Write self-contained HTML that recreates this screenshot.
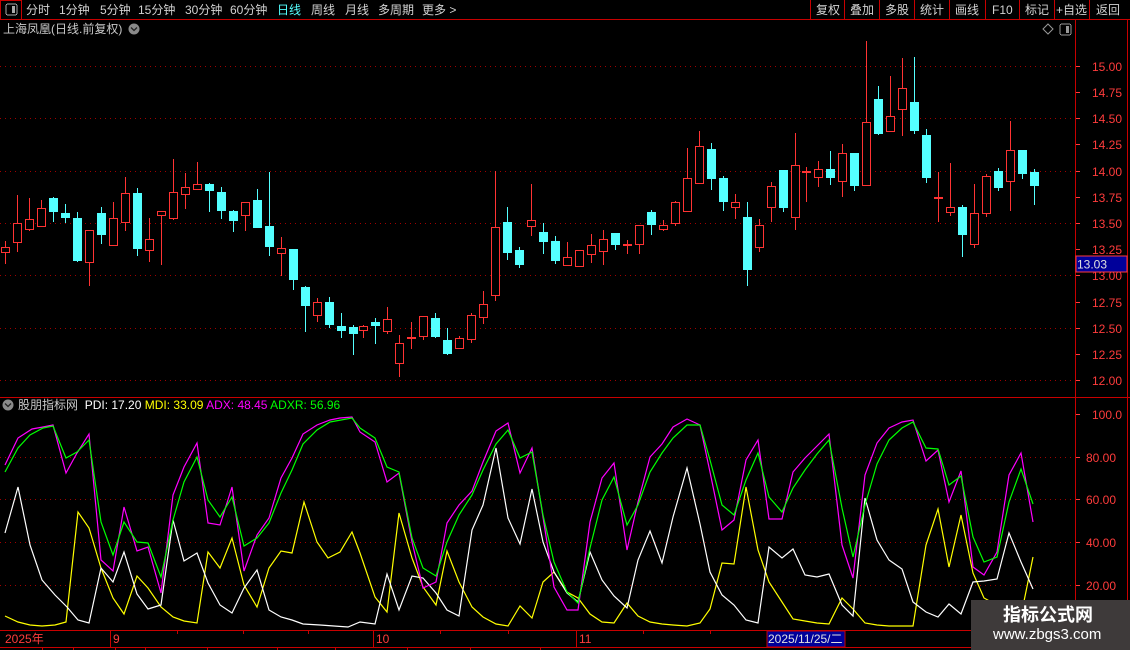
<!DOCTYPE html>
<html><head><meta charset="utf-8"><style>
html,body{margin:0;padding:0;background:#000;width:1130px;height:650px;overflow:hidden}
body{font-family:"Liberation Sans","Noto Sans CJK SC",sans-serif;position:relative}
.t{position:absolute;font-size:12px;color:#d2d2d2;white-space:nowrap;line-height:14px}
svg{position:absolute;left:0;top:0}
.r{fill:#000;stroke:#ff3333;stroke-width:1}
.rf{fill:#ff3333}
.c{fill:#54ffff}
.wr{stroke:#ff3333;stroke-width:1}
.wc{stroke:#54ffff;stroke-width:1}
.ax{font-size:12px;fill:#ff3c3c;font-family:"Liberation Sans",sans-serif}
</style></head><body>
<svg width="1130" height="650" shape-rendering="crispEdges">
<!-- frame lines -->
<line x1="0" y1="19.5" x2="1130" y2="19.5" stroke="#c80000"/>
<rect x="0.5" y="0.5" width="21" height="19" fill="none" stroke="#c80000"/>
<rect x="6" y="4" width="11" height="11" rx="2" fill="none" stroke="#aaa"/>
<rect x="12" y="6" width="3" height="7" fill="#aaa"/>
<g stroke="#c80000"><line x1="810.5" y1="0" x2="810.5" y2="19"/><line x1="844.5" y1="0" x2="844.5" y2="19"/><line x1="879.5" y1="0" x2="879.5" y2="19"/><line x1="914.5" y1="0" x2="914.5" y2="19"/><line x1="949.5" y1="0" x2="949.5" y2="19"/><line x1="985.5" y1="0" x2="985.5" y2="19"/><line x1="1019.5" y1="0" x2="1019.5" y2="19"/><line x1="1054.5" y1="0" x2="1054.5" y2="19"/><line x1="1089.5" y1="0" x2="1089.5" y2="19"/></g>
<line x1="1075.5" y1="19" x2="1075.5" y2="630" stroke="#c80000"/>
<line x1="1127.5" y1="19" x2="1127.5" y2="650" stroke="#c80000"/>
<line x1="0" y1="397.5" x2="1130" y2="397.5" stroke="#c80000"/>
<line x1="0" y1="630.5" x2="1130" y2="630.5" stroke="#c80000"/>
<line x1="0" y1="647.5" x2="1130" y2="647.5" stroke="#c80000"/>
<g stroke="#c80000"><line x1="110.5" y1="630" x2="110.5" y2="647"/><line x1="373.5" y1="630" x2="373.5" y2="647"/><line x1="576.5" y1="630" x2="576.5" y2="647"/><line x1="177.5" y1="630" x2="177.5" y2="634"/><line x1="243.5" y1="630" x2="243.5" y2="634"/><line x1="308.5" y1="630" x2="308.5" y2="634"/><line x1="440.5" y1="630" x2="440.5" y2="634"/><line x1="508.5" y1="630" x2="508.5" y2="634"/><line x1="643.5" y1="630" x2="643.5" y2="634"/><line x1="710.5" y1="630" x2="710.5" y2="634"/><line x1="842.5" y1="630" x2="842.5" y2="634"/><line x1="42.5" y1="647" x2="42.5" y2="650"/><line x1="73.5" y1="647" x2="73.5" y2="650"/><line x1="115.5" y1="647" x2="115.5" y2="650"/><line x1="145.5" y1="647" x2="145.5" y2="650"/><line x1="207.5" y1="647" x2="207.5" y2="650"/><line x1="277.5" y1="647" x2="277.5" y2="650"/><line x1="335.5" y1="647" x2="335.5" y2="650"/><line x1="407.5" y1="647" x2="407.5" y2="650"/><line x1="470.5" y1="647" x2="470.5" y2="650"/><line x1="540.5" y1="647" x2="540.5" y2="650"/></g>
<!-- dotted grid main -->
<g stroke="#a00000" stroke-dasharray="1 4">
<line x1="0" y1="66.5" x2="1075" y2="66.5"/><line x1="0" y1="118.5" x2="1075" y2="118.5"/><line x1="0" y1="171.5" x2="1075" y2="171.5"/><line x1="0" y1="223.5" x2="1075" y2="223.5"/><line x1="0" y1="275.5" x2="1075" y2="275.5"/><line x1="0" y1="328.5" x2="1075" y2="328.5"/><line x1="0" y1="380.5" x2="1075" y2="380.5"/>
<line x1="0" y1="457.5" x2="1075" y2="457.5"/><line x1="0" y1="499.5" x2="1075" y2="499.5"/><line x1="0" y1="542.5" x2="1075" y2="542.5"/><line x1="0" y1="585.5" x2="1075" y2="585.5"/>
</g>
<!-- axis ticks -->
<g stroke="#ff3c3c">
<line x1="1076" y1="66.5" x2="1080" y2="66.5"/><line x1="1076" y1="92.5" x2="1080" y2="92.5"/><line x1="1076" y1="118.5" x2="1080" y2="118.5"/><line x1="1076" y1="144.5" x2="1080" y2="144.5"/><line x1="1076" y1="171.5" x2="1080" y2="171.5"/><line x1="1076" y1="197.5" x2="1080" y2="197.5"/><line x1="1076" y1="223.5" x2="1080" y2="223.5"/><line x1="1076" y1="249.5" x2="1080" y2="249.5"/><line x1="1076" y1="275.5" x2="1080" y2="275.5"/><line x1="1076" y1="302.5" x2="1080" y2="302.5"/><line x1="1076" y1="328.5" x2="1080" y2="328.5"/><line x1="1076" y1="354.5" x2="1080" y2="354.5"/><line x1="1076" y1="380.5" x2="1080" y2="380.5"/>
<line x1="1076" y1="414.5" x2="1080" y2="414.5"/><line x1="1076" y1="457.5" x2="1080" y2="457.5"/><line x1="1076" y1="499.5" x2="1080" y2="499.5"/><line x1="1076" y1="542.5" x2="1080" y2="542.5"/><line x1="1076" y1="585.5" x2="1080" y2="585.5"/>
</g>
<g class="ax">
<text x="1092" y="71">15.00</text><text x="1092" y="97">14.75</text><text x="1092" y="123">14.50</text><text x="1092" y="149">14.25</text><text x="1092" y="176">14.00</text><text x="1092" y="202">13.75</text><text x="1092" y="228">13.50</text><text x="1092" y="254">13.25</text><text x="1092" y="280">13.00</text><text x="1092" y="307">12.75</text><text x="1092" y="333">12.50</text><text x="1092" y="359">12.25</text><text x="1092" y="385">12.00</text>
<text x="1092" y="419">100.0</text><text x="1086" y="462">80.00</text><text x="1086" y="504">60.00</text><text x="1086" y="547">40.00</text><text x="1086" y="590">20.00</text>
</g>
<rect x="1076" y="256" width="51" height="16" fill="#00009a" stroke="#ff3c3c"/>
<text x="1077" y="268.5" font-size="12" fill="#e0e0e0" font-family="Liberation Sans">13.03</text>
<!-- top right icons -->
<path d="M1048 24 L1053 29 L1048 34 L1043 29 Z" fill="none" stroke="#999" shape-rendering="auto"/>
<rect x="1060" y="24" width="11" height="11" rx="2" fill="none" stroke="#999"/>
<rect x="1066" y="26" width="3" height="7" fill="#999"/>
<!-- candles -->
<g id="cd">
<line class="wr" x1="5.5" y1="241" x2="5.5" y2="264"/><rect class="r" x="1.5" y="247.5" width="8" height="5"/>
<line class="wr" x1="17.5" y1="195" x2="17.5" y2="252"/><rect class="r" x="13.5" y="223.5" width="8" height="19"/>
<line class="wr" x1="29.5" y1="198" x2="29.5" y2="231"/><rect class="r" x="25.5" y="219.5" width="8" height="10"/>
<line class="wr" x1="41.5" y1="200" x2="41.5" y2="227"/><rect class="r" x="37.5" y="208.5" width="8" height="18"/>
<line class="wc" x1="53.5" y1="197" x2="53.5" y2="222"/><rect class="c" x="49" y="198" width="9" height="14"/>
<line class="wc" x1="65.5" y1="204" x2="65.5" y2="223"/><rect class="c" x="61" y="213" width="9" height="5"/>
<line class="wc" x1="77.5" y1="212" x2="77.5" y2="262"/><rect class="c" x="73" y="218" width="9" height="43"/>
<line class="wr" x1="89.5" y1="230" x2="89.5" y2="286"/><rect class="r" x="85.5" y="230.5" width="8" height="32"/>
<line class="wc" x1="101.5" y1="207" x2="101.5" y2="244"/><rect class="c" x="97" y="213" width="9" height="22"/>
<line class="wr" x1="113.5" y1="202" x2="113.5" y2="245"/><rect class="r" x="109.5" y="218.5" width="8" height="27"/>
<line class="wr" x1="125.5" y1="177" x2="125.5" y2="231"/><rect class="r" x="121.5" y="193.5" width="8" height="29"/>
<line class="wc" x1="137.5" y1="188" x2="137.5" y2="256"/><rect class="c" x="133" y="193" width="9" height="56"/>
<line class="wr" x1="149.5" y1="218" x2="149.5" y2="262"/><rect class="r" x="145.5" y="239.5" width="8" height="11"/>
<line class="wr" x1="161.5" y1="211" x2="161.5" y2="265"/><rect class="r" x="157.5" y="211.5" width="8" height="4"/>
<line class="wr" x1="173.5" y1="159" x2="173.5" y2="220"/><rect class="r" x="169.5" y="192.5" width="8" height="26"/>
<line class="wr" x1="185.5" y1="173" x2="185.5" y2="209"/><rect class="r" x="181.5" y="187.5" width="8" height="7"/>
<line class="wr" x1="197.5" y1="162" x2="197.5" y2="189"/><rect class="r" x="193.5" y="184.5" width="8" height="5"/>
<line class="wc" x1="209.5" y1="183" x2="209.5" y2="212"/><rect class="c" x="205" y="184" width="9" height="7"/>
<line class="wc" x1="221.5" y1="187" x2="221.5" y2="219"/><rect class="c" x="217" y="192" width="9" height="19"/>
<line class="wc" x1="233.5" y1="210" x2="233.5" y2="232"/><rect class="c" x="229" y="211" width="9" height="10"/>
<line class="wr" x1="245.5" y1="202" x2="245.5" y2="231"/><rect class="r" x="241.5" y="202.5" width="8" height="13"/>
<line class="wc" x1="257.5" y1="189" x2="257.5" y2="228"/><rect class="c" x="253" y="200" width="9" height="28"/>
<line class="wc" x1="269.5" y1="172" x2="269.5" y2="256"/><rect class="c" x="265" y="226" width="9" height="21"/>
<line class="wr" x1="281.5" y1="237" x2="281.5" y2="276"/><rect class="r" x="277.5" y="248.5" width="8" height="5"/>
<line class="wc" x1="293.5" y1="249" x2="293.5" y2="290"/><rect class="c" x="289" y="249" width="9" height="31"/>
<line class="wc" x1="305.5" y1="286" x2="305.5" y2="332"/><rect class="c" x="301" y="287" width="9" height="19"/>
<line class="wr" x1="317.5" y1="298" x2="317.5" y2="322"/><rect class="r" x="313.5" y="302.5" width="8" height="13"/>
<line class="wc" x1="329.5" y1="297" x2="329.5" y2="328"/><rect class="c" x="325" y="302" width="9" height="23"/>
<line class="wc" x1="341.5" y1="313" x2="341.5" y2="338"/><rect class="c" x="337" y="326" width="9" height="5"/>
<line class="wc" x1="353.5" y1="325" x2="353.5" y2="355"/><rect class="c" x="349" y="327" width="9" height="7"/>
<line class="wr" x1="363.5" y1="325" x2="363.5" y2="338"/><rect class="r" x="359.5" y="326.5" width="8" height="4"/>
<line class="wc" x1="375.5" y1="318" x2="375.5" y2="344"/><rect class="c" x="371" y="322" width="9" height="4"/>
<line class="wr" x1="387.5" y1="307" x2="387.5" y2="334"/><rect class="r" x="383.5" y="319.5" width="8" height="12"/>
<line class="wr" x1="399.5" y1="335" x2="399.5" y2="377"/><rect class="r" x="395.5" y="343.5" width="8" height="20"/>
<line class="wr" x1="411.5" y1="322" x2="411.5" y2="349"/><rect class="rf" x="407" y="337" width="9" height="2"/>
<line class="wr" x1="423.5" y1="316" x2="423.5" y2="340"/><rect class="r" x="419.5" y="316.5" width="8" height="20"/>
<line class="wc" x1="435.5" y1="313" x2="435.5" y2="338"/><rect class="c" x="431" y="318" width="9" height="19"/>
<line class="wc" x1="447.5" y1="328" x2="447.5" y2="355"/><rect class="c" x="443" y="340" width="9" height="14"/>
<line class="wr" x1="459.5" y1="336" x2="459.5" y2="348"/><rect class="r" x="455.5" y="338.5" width="8" height="10"/>
<line class="wr" x1="471.5" y1="313" x2="471.5" y2="343"/><rect class="r" x="467.5" y="315.5" width="8" height="24"/>
<line class="wr" x1="483.5" y1="291" x2="483.5" y2="324"/><rect class="r" x="479.5" y="304.5" width="8" height="13"/>
<line class="wr" x1="495.5" y1="171" x2="495.5" y2="301"/><rect class="r" x="491.5" y="227.5" width="8" height="68"/>
<line class="wc" x1="507.5" y1="207" x2="507.5" y2="260"/><rect class="c" x="503" y="222" width="9" height="31"/>
<line class="wc" x1="519.5" y1="247" x2="519.5" y2="268"/><rect class="c" x="515" y="250" width="9" height="15"/>
<line class="wr" x1="531.5" y1="184" x2="531.5" y2="236"/><rect class="r" x="527.5" y="220.5" width="8" height="6"/>
<line class="wc" x1="543.5" y1="223" x2="543.5" y2="254"/><rect class="c" x="539" y="232" width="9" height="10"/>
<line class="wc" x1="555.5" y1="236" x2="555.5" y2="264"/><rect class="c" x="551" y="241" width="9" height="20"/>
<line class="wr" x1="567.5" y1="242" x2="567.5" y2="265"/><rect class="r" x="563.5" y="257.5" width="8" height="8"/>
<line class="wr" x1="579.5" y1="250" x2="579.5" y2="266"/><rect class="r" x="575.5" y="250.5" width="8" height="16"/>
<line class="wr" x1="591.5" y1="234" x2="591.5" y2="263"/><rect class="r" x="587.5" y="245.5" width="8" height="9"/>
<line class="wr" x1="603.5" y1="230" x2="603.5" y2="265"/><rect class="r" x="599.5" y="239.5" width="8" height="12"/>
<line class="wc" x1="615.5" y1="233" x2="615.5" y2="250"/><rect class="c" x="611" y="233" width="9" height="12"/>
<line class="wr" x1="627.5" y1="240" x2="627.5" y2="254"/><rect class="rf" x="623" y="244" width="9" height="2"/>
<line class="wr" x1="639.5" y1="225" x2="639.5" y2="254"/><rect class="r" x="635.5" y="225.5" width="8" height="19"/>
<line class="wc" x1="651.5" y1="210" x2="651.5" y2="235"/><rect class="c" x="647" y="212" width="9" height="13"/>
<line class="wr" x1="663.5" y1="220" x2="663.5" y2="231"/><rect class="r" x="659.5" y="225.5" width="8" height="4"/>
<line class="wr" x1="675.5" y1="201" x2="675.5" y2="226"/><rect class="r" x="671.5" y="202.5" width="8" height="21"/>
<line class="wr" x1="687.5" y1="148" x2="687.5" y2="211"/><rect class="r" x="683.5" y="178.5" width="8" height="33"/>
<line class="wr" x1="699.5" y1="131" x2="699.5" y2="183"/><rect class="r" x="695.5" y="146.5" width="8" height="37"/>
<line class="wc" x1="711.5" y1="143" x2="711.5" y2="190"/><rect class="c" x="707" y="149" width="9" height="30"/>
<line class="wc" x1="723.5" y1="176" x2="723.5" y2="211"/><rect class="c" x="719" y="178" width="9" height="24"/>
<line class="wr" x1="735.5" y1="194" x2="735.5" y2="219"/><rect class="r" x="731.5" y="202.5" width="8" height="5"/>
<line class="wc" x1="747.5" y1="202" x2="747.5" y2="286"/><rect class="c" x="743" y="217" width="9" height="53"/>
<line class="wr" x1="759.5" y1="219" x2="759.5" y2="252"/><rect class="r" x="755.5" y="225.5" width="8" height="22"/>
<line class="wr" x1="771.5" y1="182" x2="771.5" y2="222"/><rect class="r" x="767.5" y="186.5" width="8" height="21"/>
<line class="wc" x1="783.5" y1="170" x2="783.5" y2="212"/><rect class="c" x="779" y="170" width="9" height="38"/>
<line class="wr" x1="795.5" y1="133" x2="795.5" y2="230"/><rect class="r" x="791.5" y="165.5" width="8" height="52"/>
<line class="wr" x1="806.5" y1="167" x2="806.5" y2="202"/><rect class="rf" x="802" y="171" width="9" height="2"/>
<line class="wr" x1="818.5" y1="161" x2="818.5" y2="187"/><rect class="r" x="814.5" y="169.5" width="8" height="8"/>
<line class="wc" x1="830.5" y1="151" x2="830.5" y2="185"/><rect class="c" x="826" y="169" width="9" height="9"/>
<line class="wr" x1="842.5" y1="144" x2="842.5" y2="197"/><rect class="r" x="838.5" y="153.5" width="8" height="28"/>
<line class="wc" x1="854.5" y1="153" x2="854.5" y2="191"/><rect class="c" x="850" y="153" width="9" height="33"/>
<line class="wr" x1="866.5" y1="41" x2="866.5" y2="185"/><rect class="r" x="862.5" y="122.5" width="8" height="63"/>
<line class="wc" x1="878.5" y1="86" x2="878.5" y2="135"/><rect class="c" x="874" y="99" width="9" height="35"/>
<line class="wr" x1="890.5" y1="76" x2="890.5" y2="131"/><rect class="r" x="886.5" y="116.5" width="8" height="15"/>
<line class="wr" x1="902.5" y1="58" x2="902.5" y2="136"/><rect class="r" x="898.5" y="88.5" width="8" height="21"/>
<line class="wc" x1="914.5" y1="57" x2="914.5" y2="134"/><rect class="c" x="910" y="102" width="9" height="29"/>
<line class="wc" x1="926.5" y1="129" x2="926.5" y2="183"/><rect class="c" x="922" y="135" width="9" height="43"/>
<line class="wr" x1="938.5" y1="172" x2="938.5" y2="222"/><rect class="rf" x="934" y="197" width="9" height="2"/>
<line class="wr" x1="950.5" y1="163" x2="950.5" y2="216"/><rect class="r" x="946.5" y="207.5" width="8" height="5"/>
<line class="wc" x1="962.5" y1="205" x2="962.5" y2="257"/><rect class="c" x="958" y="207" width="9" height="28"/>
<line class="wr" x1="974.5" y1="184" x2="974.5" y2="248"/><rect class="r" x="970.5" y="213.5" width="8" height="31"/>
<line class="wr" x1="986.5" y1="174" x2="986.5" y2="217"/><rect class="r" x="982.5" y="176.5" width="8" height="37"/>
<line class="wc" x1="998.5" y1="168" x2="998.5" y2="191"/><rect class="c" x="994" y="171" width="9" height="17"/>
<line class="wr" x1="1010.5" y1="121" x2="1010.5" y2="211"/><rect class="r" x="1006.5" y="150.5" width="8" height="31"/>
<line class="wc" x1="1022.5" y1="150" x2="1022.5" y2="179"/><rect class="c" x="1018" y="150" width="9" height="24"/>
<line class="wc" x1="1034.5" y1="169" x2="1034.5" y2="205"/><rect class="c" x="1030" y="172" width="9" height="14"/>
</g>
<!-- indicator lines -->
<g fill="none" stroke-width="1.2" shape-rendering="auto">
<polyline stroke="#ffff00" points="5,616 18,622 30,625 42,626 55,625 66,622 78,512 89,528 101,568 113,598 124,614 137,576 148,588 161,607 173,617 184,621 197,623 208,552 220,568 232,538 244,585 257,607 269,568 281,551 292,553 304,502 317,542 328,558 340,552 352,532 360,553 375,597 387,612 399,513 412,558 423,587 436,605 447,551 459,582 472,607 483,617 496,624 508,626 520,606 532,618 543,582 554,572 567,592 578,598 590,614 602,622 614,623 627,603 638,616 650,622 662,624 673,625 687,626 700,623 710,609 722,563 734,564 746,487 758,550 769,582 782,602 793,619 805,621 817,623 829,624 842,598 853,609 865,623 877,625 889,626 902,626 913,626 926,545 938,509 949,567 961,515 973,573 984,598 997,605 1009,613 1021,616 1033,557"/>
<polyline stroke="#ffffff" points="5,533 18,487 30,545 42,580 55,595 67,607 78,620 89,623 101,568 113,582 124,552 137,594 148,609 161,605 173,520 184,561 197,553 208,583 220,605 232,613 244,588 257,570 269,610 281,617 292,620 303,624 320,625 348,627 360,622 375,624 387,574 399,610 412,576 423,578 436,593 447,610 459,616 472,530 483,505 496,448 508,518 520,544 532,489 543,542 554,572 567,593 578,602 590,552 602,580 614,596 627,608 638,560 650,531 662,563 673,517 687,468 700,524 710,572 722,595 734,605 746,620 758,623 769,547 782,558 793,549 805,575 817,577 829,574 842,605 853,616 865,498 877,540 889,560 902,569 913,602 926,612 938,617 949,604 961,614 973,582 984,581 997,579 1009,533 1021,562 1033,589"/>
<polyline stroke="#ff00ff" points="5,465 18,438 32,429 43,427 53,425 66,473 77,453 89,434 101,560 113,571 124,507 137,551 148,547 161,593 173,495 184,467 197,443 208,523 220,525 232,487 244,571 257,535 269,518 281,478 292,458 303,434 317,425 330,420 340,418 352,417 360,432 375,442 387,482 399,473 412,542 423,588 436,582 447,523 459,505 472,491 483,462 496,431 508,423 520,473 532,448 543,517 554,587 567,610 578,610 590,522 602,478 614,463 627,550 638,502 650,457 662,444 673,427 687,419 700,425 710,472 722,530 734,520 746,460 758,440 769,519 782,519 793,472 805,458 817,446 829,434 842,545 853,578 865,475 877,443 889,428 902,422 913,420 926,461 938,450 949,502 961,471 973,567 984,575 997,552 1009,475 1021,453 1033,522"/>
<polyline stroke="#00ff00" points="5,472 18,448 30,435 43,428 53,426 66,458 77,452 89,440 101,522 113,555 124,522 137,542 148,543 161,577 173,520 184,482 197,457 208,500 220,517 232,497 244,546 257,538 269,523 281,493 292,470 303,444 317,430 330,422 352,418 360,428 375,438 387,467 399,472 412,538 423,568 436,576 447,542 459,515 472,495 483,470 496,444 508,430 520,458 532,452 543,515 554,562 567,592 578,603 590,548 602,500 614,477 627,525 638,505 650,472 662,453 673,438 687,425 700,425 710,460 722,505 734,515 746,480 758,453 769,497 782,512 793,488 805,470 817,454 829,440 842,508 853,557 865,505 877,464 889,440 902,428 913,422 926,448 938,449 949,485 961,476 973,537 984,562 997,557 1009,502 1021,469 1033,504"/>
</g>
<rect x="0" y="398" width="400" height="16" fill="#000"/>
<circle cx="8" cy="405" r="5.5" fill="#8a8a8a" shape-rendering="auto"/>
<path d="M5 403.5 L8 406.5 L11 403.5" fill="none" stroke="#222" stroke-width="1.3" shape-rendering="auto"/>
<circle cx="134" cy="29" r="5.5" fill="#8a8a8a" shape-rendering="auto"/>
<path d="M131 27.5 L134 30.5 L137 27.5" fill="none" stroke="#222" stroke-width="1.3" shape-rendering="auto"/>
<rect x="767" y="631" width="78" height="16" fill="#00009a" stroke="#c80000"/>
</svg>
<div class="t" style="left:26px;top:3px">分时</div>
<div class="t" style="left:59px;top:3px">1分钟</div>
<div class="t" style="left:100px;top:3px">5分钟</div>
<div class="t" style="left:138px;top:3px">15分钟</div>
<div class="t" style="left:185px;top:3px">30分钟</div>
<div class="t" style="left:230px;top:3px">60分钟</div>
<div class="t" style="left:277px;top:3px;color:#54ffff">日线</div>
<div class="t" style="left:311px;top:3px">周线</div>
<div class="t" style="left:345px;top:3px">月线</div>
<div class="t" style="left:378px;top:3px">多周期</div>
<div class="t" style="left:422px;top:3px">更多 &gt;</div>
<div class="t" style="left:816px;top:3px">复权</div>
<div class="t" style="left:850px;top:3px">叠加</div>
<div class="t" style="left:885px;top:3px">多股</div>
<div class="t" style="left:920px;top:3px">统计</div>
<div class="t" style="left:955px;top:3px">画线</div>
<div class="t" style="left:992px;top:3px">F10</div>
<div class="t" style="left:1025px;top:3px">标记</div>
<div class="t" style="left:1056px;top:3px">+自选</div>
<div class="t" style="left:1096px;top:3px">返回</div>
<div class="t" style="left:3px;top:22px;color:#c8c8c8">上海凤凰(日线.前复权)</div>
<div class="t" style="left:18px;top:398px"><span style="color:#c8c8c8">股朋指标网</span>&nbsp; <span style="color:#fff">PDI: 17.20</span> <span style="color:#ffff00">MDI: 33.09</span> <span style="color:#ff00ff">ADX: 48.45</span> <span style="color:#00ff00">ADXR: 56.96</span></div>
<div class="t" style="left:5px;top:632px;color:#ff3c3c">2025年</div>
<div class="t" style="left:113px;top:632px;color:#ff3c3c">9</div>
<div class="t" style="left:376px;top:632px;color:#ff3c3c">10</div>
<div class="t" style="left:579px;top:632px;color:#ff3c3c">11</div>
<div class="t" style="left:768px;top:632px;color:#e0e0e0">2025/11/25/二</div>
<div style="position:absolute;left:971px;top:600px;width:159px;height:50px;background:#3e3a3a"></div>
<div class="t" style="left:1003px;top:604px;font-size:18px;line-height:22px;font-weight:bold;color:#fff">指标公式网</div>
<div class="t" style="left:993px;top:626px;font-size:15px;line-height:18px;color:#fff">www.zbgs3.com</div>
</body></html>
